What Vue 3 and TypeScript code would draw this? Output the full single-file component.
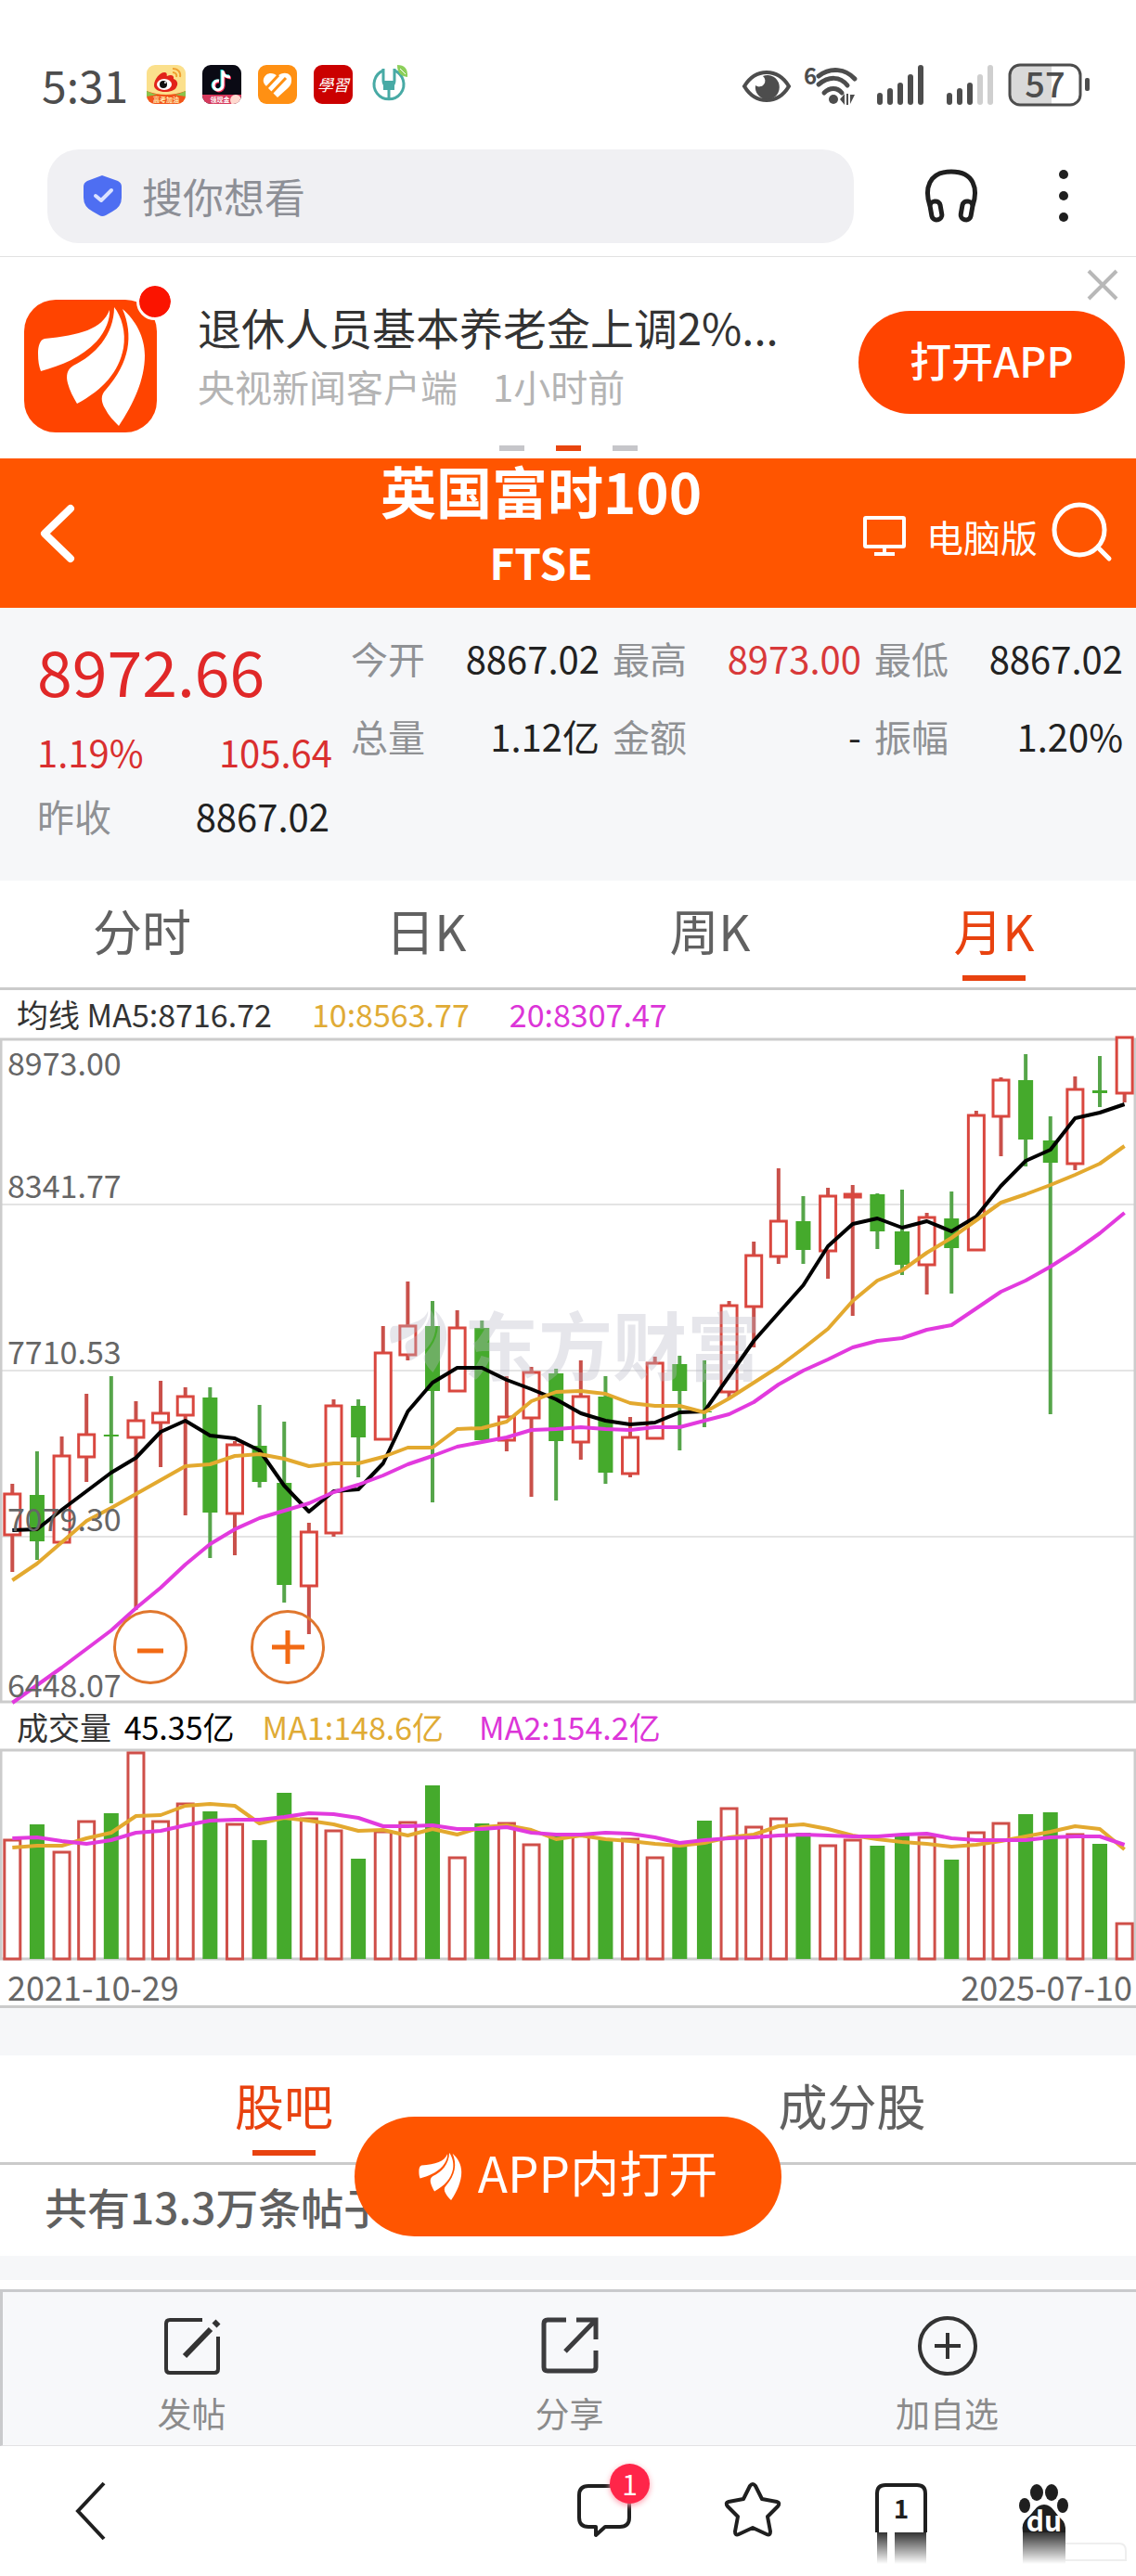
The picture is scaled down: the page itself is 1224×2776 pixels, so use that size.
<script setup lang="ts">
import { ref } from 'vue'

type Candle = [kind: 'up' | 'down', high: number, top: number, bottom: number, low: number]

const candles: Candle[] = [
  ['up', 499, 510, 554, 594], ['down', 464, 511, 561, 581], ['up', 448, 469, 562, 562],
  ['up', 402, 446, 470, 497], ['down', 383, 446, 448, 520], ['up', 410, 431, 449, 635],
  ['up', 388, 423, 433, 481], ['up', 395, 405, 425, 533], ['down', 395, 406, 530, 579],
  ['up', 453, 457, 531, 576], ['down', 414, 458, 497, 503], ['down', 432, 498, 608, 627],
  ['up', 541, 551, 609, 661], ['up', 408, 415, 552, 556], ['down', 408, 415, 449, 492],
  ['up', 329, 358, 451, 451], ['up', 281, 329, 360, 366], ['down', 302, 329, 399, 519],
  ['up', 312, 331, 399, 399], ['down', 323, 331, 452, 452], ['up', 383, 427, 452, 464],
  ['up', 373, 379, 428, 513], ['down', 375, 380, 453, 517], ['up', 366, 405, 454, 473],
  ['down', 383, 405, 487, 499], ['up', 427, 449, 488, 492], ['up', 362, 369, 450, 450],
  ['down', 361, 370, 399, 463], ['down', 366, 421, 422, 438], ['up', 302, 307, 400, 407],
  ['up', 238, 253, 308, 352], ['up', 159, 216, 254, 262], ['down', 189, 216, 247, 262],
  ['up', 180, 189, 248, 278], ['up', 177, 187, 190, 318], ['down', 186, 187, 227, 246],
  ['down', 182, 227, 263, 274], ['up', 207, 212, 263, 295], ['down', 184, 213, 245, 294],
  ['up', 97, 102, 247, 248], ['up', 61, 64, 103, 146], ['down', 36, 64, 128, 157],
  ['down', 103, 129, 153, 424], ['up', 60, 74, 154, 161], ['down', 38, 75, 78, 93],
  ['up', 17, 18, 78, 88],
]

const ma5 = [549, 548, 527, 507, 487, 471, 443, 431, 447, 450, 463, 501, 529, 507, 505, 477, 421, 390, 374, 374, 387, 397, 408, 423, 431, 435, 433, 422, 421, 383, 345, 315, 285, 243, 219, 213, 223, 216, 227, 211, 178, 151, 139, 105, 99, 90]
const ma10 = [603, 585, 562, 539, 525, 510, 495, 480, 478, 469, 467, 472, 480, 477, 477, 470, 460, 460, 440, 439, 432, 410, 400, 399, 402, 412, 415, 415, 422, 407, 390, 373, 353, 332, 302, 280, 269, 250, 234, 215, 196, 187, 177, 166, 154, 135]
const ma20 = [735, 716, 697, 677, 657, 633, 611, 586, 564, 548, 536, 528, 520, 508, 500, 490, 478, 469, 459, 454, 449, 441, 440, 438, 440, 441, 438, 438, 431, 424, 411, 392, 377, 365, 352, 345, 342, 333, 328, 310, 292, 280, 265, 248, 229, 207]

const volumes = [128, 145, 115, 148, 157, 222, 148, 167, 159, 145, 128, 179, 151, 138, 108, 137, 147, 187, 109, 146, 146, 123, 134, 133, 128, 129, 109, 121, 149, 162, 142, 151, 136, 122, 128, 122, 133, 131, 107, 136, 146, 156, 158, 134, 124, 38]
const volMa1 = [120, 122, 122, 130, 136, 154, 155, 165, 167, 165, 146, 152, 149, 145, 138, 139, 133, 140, 134, 142, 144, 139, 129, 133, 129, 127, 124, 122, 125, 131, 134, 143, 145, 140, 133, 129, 126, 124, 121, 123, 127, 132, 137, 143, 140, 118]
const volMa2 = [130, 131, 127, 124, 128, 136, 138, 144, 149, 150, 150, 153, 157, 156, 152, 143, 143, 144, 140, 140, 142, 136, 134, 134, 136, 135, 131, 125, 128, 130, 131, 133, 134, 133, 132, 132, 134, 135, 130, 128, 128, 128, 131, 132, 132, 123]

const STEP = 26.63
const VOL_BASE = 226
const cx = (i: number): number => 13.3 + STEP * i
const line = (ys: number[]): string => ys.map((y, i) => `${cx(i).toFixed(1)},${y}`).join(' ')
const volLine = (vs: number[]): string => line(vs.map((v) => VOL_BASE - v))

const axis = [
  { label: '8973.00', y: 59 },
  { label: '8341.77', y: 191 },
  { label: '7710.53', y: 370 },
  { label: '7079.30', y: 550 },
  { label: '6448.07', y: 729 },
]

const quotes = [
  { label: '今开', value: '8867.02', rise: false },
  { label: '最高', value: '8973.00', rise: true },
  { label: '最低', value: '8867.02', rise: false },
  { label: '总量', value: '1.12亿', rise: false },
  { label: '金额', value: '-', rise: false },
  { label: '振幅', value: '1.20%', rise: false },
]

const periods = ['分时', '日K', '周K', '月K']
const period = ref('月K')
const boards = ['股吧', '成分股']
const board = ref('股吧')
const query = ref('')
</script>

<template>
  <div class="page">
    <svg class="defs" width="0" height="0" aria-hidden="true">
      <symbol id="feathers" viewBox="14 6 118 132">
        <path d="M92 11C84 32 60 38 22 42C17 43 15 50 15 58C15 66 16 72 18 77C40 71 62 62 78 45C88 34 93 20 92 11Z" />
        <path d="M97 8C97 38 76 60 53 71C46 75 45 82 47 90C49 98 53 105 57 112C85 97 102 78 107 52C110 35 105 18 97 8Z" />
        <path d="M106 10C118 38 114 68 88 97C82 103 83 110 87 117C91 125 97 131 102 136C118 112 130 86 130 60C130 40 120 22 106 10Z" />
      </symbol>
    </svg>

    <header class="status">
      <span class="clock">5:31</span>
      <div class="apps">
        <svg viewBox="0 0 42 42">
          <defs><clipPath id="appClip"><rect width="42" height="42" rx="9" /></clipPath></defs>
          <g clip-path="url(#appClip)">
            <rect width="42" height="42" fill="#fbe08c" />
            <path d="M0 28Q21 36 42 28V42H0Z" fill="#f2541b" />
            <path d="M0 28Q6 31 12 32L0 34Z M42 28Q36 31 30 32L42 34Z" fill="#8bc34a" />
            <path d="M8 22C8 15 15 7 20 8C23 9 21 12 22 12C26 10 30 11 29 15C34 17 34 21 32 24C29 31 8 31 8 22Z" fill="#e2231a" />
            <ellipse cx="19" cy="21" rx="8" ry="6" fill="#fff" />
            <circle cx="18" cy="21" r="4" fill="#111" /><circle cx="20" cy="19" r="1" fill="#fff" />
            <path d="M28 4C34 4 37 8 36 13M28 8C31 8 33 10 32 13" fill="none" stroke="#f0a030" stroke-width="2" />
            <text x="21" y="40" class="tiny" fill="#ffe9b0">高考加油</text>
          </g>
        </svg>
        <svg viewBox="0 0 42 42">
          <g clip-path="url(#appClip)">
            <rect width="42" height="42" fill="#0a0a14" />
            <path d="M21 5V21A5 5 0 1 1 17 17M21 6C22 10 25 12 29 12" fill="none" stroke="#25f4ee" stroke-width="3" />
            <path d="M23 7V23A5 5 0 1 1 18 18M23 8C24 12 27 14 31 14" fill="none" stroke="#fe2c55" stroke-width="3" />
            <path d="M22 6V22A5 5 0 1 1 18 17M22 7C23 11 26 13 30 13" fill="none" stroke="#fff" stroke-width="3" />
            <path d="M0 32H42V42H0Z" fill="#d6395c" /><circle cx="36" cy="38" r="6" fill="#ffd9cf" />
            <text x="19" y="40" class="tiny" fill="#fff">领现金</text>
          </g>
        </svg>
        <svg viewBox="0 0 42 42">
          <rect width="42" height="42" rx="9" fill="#ff9013" />
          <path d="M21 12C28 6 37 9 36 17C36 21 34 23 31 26L21 35L17 31L11 25C7 21 5 19 6 15C8 8 16 7 21 12Z" fill="#fff" />
          <path d="M8 26L22 11M14 31L30 14" stroke="#ff9013" stroke-width="3" />
        </svg>
        <svg viewBox="0 0 42 42">
          <rect width="42" height="42" rx="9" fill="#cb0000" />
          <text x="21" y="28" class="study" fill="#fff">學習</text>
        </svg>
        <svg viewBox="0 0 42 42">
          <path d="M15 6A16 16 0 1 0 27 6" fill="none" stroke="#48aaa5" stroke-width="3" />
          <path d="M15 4V17Q15 21 18 22H24Q27 21 27 17V4M21 18V37" fill="none" stroke="#48aaa5" stroke-width="3" />
          <path d="M15 17H27V27H15Z" fill="#48aaa5" />
          <path d="M30 0Q42 0 41 13Q30 12 30 0Z" fill="#8ccf5a" /><path d="M33 4L39 10" stroke="#fff" />
        </svg>
      </div>
      <svg class="signals" viewBox="0 0 376 46">
        <g fill="none" stroke="#4d4d4d">
          <path d="M3 25C15 5 39 5 51 25C39 45 15 45 3 25Z" stroke-width="4" />
          <path d="M83 14C96 4 112 6 122 17M83 23C94 14 106 14 114 24M89 32C95 26 103 26 108 32" stroke-width="5" stroke-linecap="round" />
        </g>
        <path d="M23 14A13 13 0 1 1 15 24A6 6 0 1 0 23 14Z" fill="#4d4d4d" />
        <g fill="#4d4d4d">
          <circle cx="99" cy="39" r="5" /><path d="M106 39L111 33V45ZM113 33H115V45H113ZM117 34H122L117 44Z" />
          <text x="67" y="23" class="six">6</text>
          <rect x="146" y="32" width="6" height="13" rx="3" /><rect x="157" y="27" width="6" height="18" rx="3" />
          <rect x="168" y="21" width="6" height="24" rx="3" /><rect x="179" y="12" width="6" height="33" rx="3" />
          <rect x="190" y="2" width="6" height="43" rx="3" />
          <rect x="221" y="32" width="6" height="13" rx="3" /><rect x="232" y="27" width="6" height="18" rx="3" />
          <rect x="243" y="21" width="6" height="24" rx="3" />
          <rect x="370" y="16" width="5" height="14" rx="2" />
        </g>
        <rect x="254" y="12" width="6" height="33" rx="3" fill="#cfcfcf" /><rect x="265" y="2" width="6" height="43" rx="3" fill="#cfcfcf" />
        <path d="M300 3H334V44H300Q290 44 290 32V14Q290 3 300 3Z" fill="#d9d9d9" />
        <rect x="289" y="2" width="76" height="43" rx="11" fill="none" stroke="#4d4d4d" stroke-width="3" />
        <text x="327" y="37" class="battery" fill="#4d4d4d">57</text>
      </svg>
    </header>

    <div class="searchbar">
      <label class="searchbox">
        <svg width="41" height="44" viewBox="0 0 41 44" aria-hidden="true">
          <path d="M20 0L37 6Q41 8 41 12V24Q41 34 31 39L24 43Q20 45 17 43L10 39Q0 34 0 24V12Q0 8 4 6Z" fill="#4e6ef2" />
          <path d="M13 22L19 27L30 16" fill="none" stroke="#dbe2ff" stroke-width="4" stroke-linecap="round" stroke-linejoin="round" />
        </svg>
        <input v-model="query" type="text" placeholder="搜你想看" aria-label="搜索" />
      </label>
      <button class="plain" aria-label="听">
        <svg width="58" height="58" viewBox="0 0 58 58" fill="none" stroke="#1f1f1f" stroke-width="5">
          <path d="M6 40C0 22 4 3 29 3S58 22 52 40" />
          <rect x="7" y="35" width="11" height="20" rx="5" transform="rotate(-10 12 45)" />
          <rect x="40" y="35" width="11" height="20" rx="5" transform="rotate(10 46 45)" />
        </svg>
      </button>
      <button class="plain" aria-label="更多">
        <svg width="12" height="58" viewBox="0 0 12 58" fill="#1f1f1f">
          <circle cx="6" cy="6" r="5" /><circle cx="6" cy="29" r="5" /><circle cx="6" cy="52" r="5" />
        </svg>
      </button>
    </div>

    <section class="promo">
      <div class="logo">
        <svg viewBox="0 0 143 143"><rect width="143" height="143" rx="34" fill="#ff4400" /><use href="#feathers" x="14" y="6" width="118" height="132" fill="#fff" /></svg>
        <i class="dot"></i>
      </div>
      <div class="promo-text">
        <p class="promo-title">退休人员基本养老金上调2%...</p>
        <p class="promo-sub"><span>央视新闻客户端</span><span>1小时前</span></p>
      </div>
      <button class="open">打开APP</button>
      <button class="close plain" aria-label="关闭">
        <svg width="32" height="32" viewBox="0 0 32 32"><path d="M1 1L31 31M31 1L1 31" stroke="#b8b8b8" stroke-width="4" /></svg>
      </button>
      <div class="pager"><i></i><i class="on"></i><i></i></div>
    </section>

    <nav class="titlebar">
      <a href="#" class="back" aria-label="返回">
        <svg width="36" height="62" viewBox="0 0 36 62"><path d="M32 4L4 31L32 58" fill="none" stroke="#fff" stroke-width="8" stroke-linecap="round" stroke-linejoin="round" /></svg>
      </a>
      <div class="heading"><h1>英国富时100</h1><h2>FTSE</h2></div>
      <div class="tools">
        <a href="#" class="desktop">
          <svg width="46" height="44" viewBox="0 0 46 44" fill="none" stroke="#fff" stroke-width="4"><rect x="2" y="2" width="42" height="31" rx="1" /><path d="M23 33V40M12 41H34" /></svg>
          电脑版
        </a>
        <a href="#" class="find" aria-label="搜索">
          <svg width="64" height="64" viewBox="0 0 64 64" fill="none" stroke="#fff" stroke-width="5" stroke-linecap="round"><circle cx="29" cy="30" r="27" /><path d="M49 49L61 61" /></svg>
        </a>
      </div>
    </nav>

    <section class="stats">
      <div class="price">
        <strong>8972.66</strong>
        <div class="change"><span>1.19%</span><span>105.64</span></div>
        <div class="prev"><span class="label">昨收</span><span>8867.02</span></div>
      </div>
      <dl class="quotes">
        <div v-for="q in quotes" :key="q.label">
          <dt>{{ q.label }}</dt>
          <dd :class="{ rise: q.rise }">{{ q.value }}</dd>
        </div>
      </dl>
    </section>

    <div class="tabs">
      <button v-for="p in periods" :key="p" :class="{ on: p === period }" @click="period = p">{{ p }}</button>
    </div>

    <div class="legend">
      <span>均线 MA5:8716.72</span><span class="gold">10:8563.77</span><span class="pink">20:8307.47</span>
    </div>
    <div class="kline">
      <svg viewBox="0 18 1224 718" role="img" aria-label="月K线图">
        <path d="M2 198H1222M2 377H1222M2 556H1222" stroke="#e4e4e4" stroke-width="2" />
        <path d="M1 20H1223V734H1Z" fill="none" stroke="#cccccc" stroke-width="3" />
        <g v-for="(c, i) in candles" :key="i">
          <template v-if="c[0] === 'up'">
            <path :d="`M${cx(i)} ${c[1]}V${c[2]}M${cx(i)} ${c[3]}V${c[4]}`" stroke="#c9504a" stroke-width="4" />
            <rect :x="cx(i) - 8.5" :y="c[2]" width="17" :height="c[3] - c[2]" fill="#fff" stroke="#d9473f" stroke-width="3" />
          </template>
          <template v-else>
            <path :d="`M${cx(i)} ${c[1]}V${c[4]}`" stroke="#56a54a" stroke-width="4" />
            <rect :x="cx(i) - 8" :y="c[2]" width="16" :height="c[3] - c[2]" fill="#45aa2c" />
          </template>
        </g>
        <g class="mark">
          <use href="#feathers" x="415" y="310" width="72" height="70" />
          <text x="500" y="381">东方财富</text>
        </g>
        <g fill="none" stroke-width="4" stroke-linejoin="round">
          <polyline :points="line(ma5)" stroke="#000" />
          <polyline :points="line(ma10)" stroke="#e3a92f" />
          <polyline :points="line(ma20)" stroke="#e23ade" />
        </g>
        <text v-for="a in axis" :key="a.label" x="8" :y="a.y" class="axis">{{ a.label }}</text>
      </svg>
      <div class="zoomers">
        <button aria-label="缩小"><svg viewBox="0 0 80 80"><path d="M26 44H54" /></svg></button>
        <button aria-label="放大"><svg viewBox="0 0 80 80"><path d="M23 40H58M40 22V58" /></svg></button>
      </div>
    </div>

    <div class="legend volume-legend">
      <span>成交量 <b>45.35亿</b></span><span class="gold">MA1:148.6亿</span><span class="pink">MA2:154.2亿</span>
    </div>
    <svg class="volume" viewBox="0 0 1224 228" role="img" aria-label="成交量图">
      <path d="M1 1H1223V226H1Z" fill="none" stroke="#cccccc" stroke-width="3" />
      <template v-for="(v, i) in volumes" :key="i">
        <rect v-if="candles[i][0] === 'up'" :x="cx(i) - 8.5" :y="VOL_BASE - v" width="17" :height="v" fill="#fff" stroke="#cf4f49" stroke-width="3" />
        <rect v-else :x="cx(i) - 8" :y="VOL_BASE - v" width="16" :height="v" fill="#45aa2c" />
      </template>
      <g fill="none" stroke-width="4" stroke-linejoin="round">
        <polyline :points="volLine(volMa1)" stroke="#e3a92f" />
        <polyline :points="volLine(volMa2)" stroke="#e23ade" />
      </g>
    </svg>
    <div class="dates"><time>2021-10-29</time><time>2025-07-10</time></div>

    <section class="posts">
      <div class="tabs boards">
        <button v-for="b in boards" :key="b" :class="{ on: b === board }" @click="board = b">{{ b }}</button>
      </div>
      <p class="count">共有13.3万条帖子</p>
      <a href="#" class="float">
        <svg width="47" height="55" viewBox="0 0 47 55"><use href="#feathers" width="47" height="55" fill="#fff" /></svg>
        <span>APP内打开</span>
      </a>
    </section>

    <nav class="actions">
      <a href="#">
        <svg width="64" height="64" viewBox="0 0 64 64" fill="none" stroke="#333" stroke-width="4"><path d="M43 4H8Q4 4 4 8V57Q4 61 8 61H56Q60 61 60 57V22" /><path d="M24 43L52 14" stroke-width="6" /><path d="M56 10L60 6" stroke-width="7" /></svg>
        发帖
      </a>
      <a href="#">
        <svg width="64" height="64" viewBox="0 0 64 64" fill="none" stroke="#3c3c3e" stroke-width="5"><path d="M28 4H8Q4 4 4 8V55Q4 59 8 59H56Q60 59 60 55V37" /><path d="M39 4H60V25M60 4L27 38" /></svg>
        分享
      </a>
      <a href="#">
        <svg width="64" height="64" viewBox="0 0 64 64" fill="none" stroke="#333" stroke-width="4"><circle cx="32" cy="32" r="30" /><path d="M32 18V46M18 32H46" /></svg>
        加自选
      </a>
    </nav>

    <footer class="browser">
      <button class="plain" aria-label="后退">
        <svg width="34" height="62" viewBox="0 0 34 62"><path d="M32 1L4 31L32 61" fill="none" stroke="#1f1f1f" stroke-width="4" /></svg>
      </button>
      <div class="browser-tools">
        <button class="plain comment" aria-label="评论">
          <svg width="60" height="60" viewBox="0 0 60 60"><path d="M12 4H46Q56 4 56 14V38Q56 48 46 48H30L20 57V48H12Q2 48 2 38V14Q2 4 12 4Z" fill="none" stroke="#1f1f1f" stroke-width="4" stroke-linejoin="round" /></svg>
          <span class="badge">1</span>
        </button>
        <button class="plain" aria-label="收藏">
          <svg width="62" height="60" viewBox="0 0 62 60"><path d="M28 4Q31 0 34 4L41 18L57 21Q61 22 58 26L47 37L50 53Q50 58 46 56L31 49L16 56Q12 58 12 53L15 37L4 26Q1 22 5 21L21 18Z" fill="none" stroke="#1f1f1f" stroke-width="4" stroke-linejoin="round" /></svg>
        </button>
        <button class="plain" aria-label="窗口">
          <svg width="58" height="60" viewBox="0 0 58 60">
            <defs><linearGradient id="fade" x2="0" y2="1"><stop stop-color="#333" /><stop offset="1" stop-color="#fff" /></linearGradient></defs>
            <path d="M5 54V12Q5 3 14 3H48Q57 3 57 12V54" fill="none" stroke="#1f1f1f" stroke-width="4" />
            <path d="M5 54H16V88H5ZM24 54H58V88H24Z" fill="url(#fade)" />
            <text x="31" y="39" class="count-one" fill="#1f1f1f">1</text>
          </svg>
        </button>
        <button class="plain" aria-label="百度">
          <svg width="56" height="60" viewBox="0 0 56 60">
            <g fill="#1f1f1f">
              <ellipse cx="21" cy="11" rx="7" ry="9" /><ellipse cx="37" cy="11" rx="7" ry="9" />
              <ellipse cx="8" cy="25" rx="6" ry="8" /><ellipse cx="49" cy="25" rx="6" ry="8" />
              <path d="M29 24C38 24 41 34 47 39Q53 44 52 54H6Q4 44 11 38C18 33 20 24 29 24Z" />
            </g>
            <path d="M6 54H52V88H6Z" fill="url(#fade)" />
            <path d="M52 66H110Q117 66 117 74V84H52" fill="none" stroke="#eeeeee" stroke-width="2" />
            <text x="29" y="53" class="du" fill="#fff">du</text>
          </svg>
        </button>
      </div>
    </footer>
  </div>
</template>

<style>
body { margin: 0; background: #fff; }
</style>

<style scoped>
.page { font-family: "Noto Sans CJK SC", "Noto Sans", sans-serif; color: #222; background: #fff; overflow: hidden; }
.page * { box-sizing: border-box; }
.defs { position: absolute; }
a { color: inherit; text-decoration: none; }
button, input { font: inherit; color: inherit; border: 0; background: none; padding: 0; margin: 0; }
p, h1, h2, dl, dd { margin: 0; }
svg { display: block; flex: none; overflow: visible; }
.plain { display: block; }

.status { display: flex; align-items: flex-start; height: 161px; padding: 68px 49px 0 45px; }
.clock { width: 113px; font-size: 48px; line-height: 44px; color: #4d4d4d; }
.apps { display: flex; gap: 18px; padding-top: 2px; }
.apps svg { width: 42px; height: 42px; }
.signals { width: 376px; height: 46px; margin-left: auto; }
.tiny { font-size: 7px; font-weight: 700; text-anchor: middle; }
.study { font-size: 17px; font-style: italic; text-anchor: middle; }
.six { font-size: 24px; font-weight: 700; }
.battery { font-size: 38px; font-weight: 500; text-anchor: middle; }

.searchbar { display: flex; align-items: center; height: 116px; padding: 0 72px 15px 51px; border-bottom: 1px solid #e2e2e2; }
.searchbox { flex: 1; display: flex; align-items: center; gap: 22px; height: 101px; padding-left: 39px; border-radius: 34px; background: #f0f0f3; margin-right: 76px; }
.searchbox input { flex: 1; min-width: 0; font-size: 44px; line-height: 64px; outline: 0; }
.searchbox input::placeholder { color: #8d8f96; opacity: 1; }
.searchbar .plain + .plain { margin-left: 86px; }

.promo { position: relative; display: flex; align-items: flex-start; height: 217px; padding: 46px 12px 0 26px; }
.logo { position: relative; width: 143px; height: 143px; }
.dot { position: absolute; top: -15px; right: -15px; width: 34px; height: 34px; border-radius: 50%; background: #fb1400; outline: 3px solid #fff; }
.promo-text { flex: 1; min-width: 0; padding-left: 44px; margin-top: -3px; white-space: nowrap; }
.promo-title { font-size: 47px; line-height: 64px; color: #333; }
.promo-sub { display: flex; gap: 38px; font-size: 40px; line-height: 64px; color: #b4b4b4; }
.open { width: 287px; height: 111px; margin-top: 12px; padding-bottom: 6px; border-radius: 56px; background: #ff4400; color: #fff; font-size: 45px; font-weight: 500; line-height: 64px; }
.close { position: absolute; top: 14px; right: 20px; }
.pager { position: absolute; left: 0; right: 0; bottom: 8px; display: flex; justify-content: center; gap: 34px; }
.pager i { width: 27px; height: 6px; background: #c6c6ca; }
.pager .on { background: #e8450e; }

.titlebar { display: grid; grid-template-columns: 240px 1fr 298px; align-items: center; height: 161px; background: #ff5500; color: #fff; }
.back { padding-left: 44px; }
.heading { align-self: start; text-align: center; }
.heading h1 { font-size: 60px; line-height: 68px; font-weight: 700; }
.heading h2 { font-size: 46px; line-height: 86px; font-weight: 700; }
.tools { display: flex; align-items: center; gap: 16px; padding-left: 4px; padding-bottom: 4px; }
.desktop { display: flex; align-items: center; gap: 22px; font-size: 40px; line-height: 56px; padding-top: 10px; white-space: nowrap; }

.stats { display: flex; justify-content: space-between; height: 294px; padding: 12px 14px 0 40px; background: #f6f7f9; font-size: 40px; }
.price { width: 318px; color: #d92f2f; padding-top: 5px; }
.price strong { display: block; font-size: 68px; line-height: 100px; font-weight: 400; color: #e02828; }
.change, .prev { display: flex; justify-content: space-between; line-height: 76px; }
.prev { line-height: 62px; color: #222; padding-right: 3px; }
.label, .quotes dt { color: #8f9194; }
.quotes { display: grid; grid-template-columns: repeat(3, 1fr); column-gap: 14px; grid-auto-rows: 84px; width: 832px; line-height: 84px; }
.quotes div { display: flex; justify-content: space-between; }
.quotes .rise { color: #d8393a; }

.tabs { display: flex; height: 118px; border-bottom: 3px solid #cbcbcb; }
.tabs button { position: relative; flex: 1; font-size: 53px; line-height: 76px; padding-bottom: 9px; color: #616161; }
.tabs .on { color: #e8420f; }
.tabs .on::after { content: ""; position: absolute; left: 50%; bottom: 7px; width: 68px; height: 6px; margin-left: -34px; background: #e8420f; }

.legend { display: flex; align-items: center; gap: 43px; height: 51px; padding: 0 18px; font-size: 34px; line-height: 48px; color: #333; white-space: pre; }
.volume-legend { height: 49px; gap: 30px; }
.volume-legend .pink { margin-left: 8px; }
.legend b { font-weight: 400; color: #000; margin-left: 6px; }
.gold { color: #e0ab35; }
.pink { color: #dc35d8; }
.kline { position: relative; }
.kline > svg, .volume { width: 100%; height: auto; }
.axis { font-size: 34px; fill: #666; }
.mark { fill: #b9b9c8; opacity: 0.35; font-size: 80px; font-weight: 700; }
.zoomers { position: absolute; left: 122px; bottom: 21px; display: flex; gap: 68px; }
.zoomers button { width: 80px; height: 80px; border: 3px solid #e0772e; border-radius: 50%; }
.zoomers svg { width: 80px; height: 80px; margin: -3px; fill: none; stroke: #f26a14; stroke-width: 5; }
.dates { display: flex; justify-content: space-between; height: 51px; padding: 0 4px 0 8px; border-bottom: 3px solid #cbcbcb; font-size: 36px; line-height: 54px; color: #666; }

.posts { position: relative; border-top: 51px solid #f6f7f9; border-bottom: 26px solid #f6f7f9; }
.count { padding: 0 48px; font-size: 46px; line-height: 88px; height: 98px; color: #606060; font-weight: 500; }
.float { position: absolute; left: 0; right: 0; top: 66px; display: flex; align-items: center; justify-content: center; gap: 17px; width: 460px; height: 129px; margin: 0 auto; border-radius: 65px; background: #ff5500; color: #fff; font-size: 53px; line-height: 76px; }
.float span { padding-bottom: 12px; }

.actions { display: grid; grid-template-columns: repeat(3, 1fr); height: 169px; margin-top: 10px; border-top: 3px solid #c9cacc; border-left: 3px solid #c9cacc; border-bottom: 1px solid #e2e2e4; background: #f7f8fa; }
.actions a { display: flex; flex-direction: column; align-items: center; gap: 14px; padding-top: 26px; font-size: 37px; line-height: 52px; color: #8b8b8b; }
.browser { display: flex; justify-content: space-between; height: 140px; padding: 39px 72px 0 80px; }
.browser-tools { display: flex; align-items: flex-start; gap: 98px; }
.browser .plain { align-self: flex-start; }
.comment { position: relative; }
.badge { position: absolute; top: -20px; right: -18px; width: 43px; height: 43px; border-radius: 50%; background: #ff2549; box-shadow: 0 2px 6px #ff9aaa; color: #fff; font-size: 30px; line-height: 43px; text-align: center; }
.count-one { font-size: 28px; font-weight: 700; text-anchor: middle; }
.du { font-size: 30px; font-weight: 700; text-anchor: middle; }
</style>
